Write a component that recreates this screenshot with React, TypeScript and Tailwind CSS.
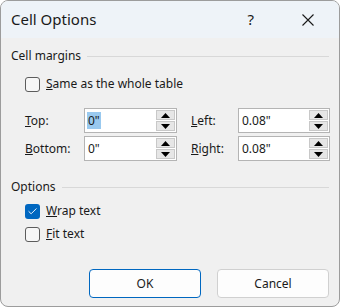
import { Check } from "lucide-react"

function Spin() {
    return (
        <div className="flex flex-col gap-[1px] mr-[1px]">
            <div className="w-[19px] h-[10px] bg-[#e6e6e6] border border-[#c8c8c8] flex items-center justify-center">
                <svg width="9" height="5" viewBox="0 0 9 5"><path d="M4.5 0 L9 5 L0 5 Z" fill="#000" /></svg>
            </div>
            <div className="w-[19px] h-[10px] bg-[#e6e6e6] border border-[#c8c8c8] flex items-center justify-center">
                <svg width="9" height="5" viewBox="0 0 9 5"><path d="M0 0 L9 0 L4.5 5 Z" fill="#000" /></svg>
            </div>
        </div>
    )
}

function Field({ value, selected }: { value: string; selected?: boolean }) {
    return (
        <div className="w-full h-[25px] bg-white border border-[#b4b4b4] flex items-center justify-between pl-[2px]">
            <span className={selected ? "bg-[#99c9ef] px-[1px] leading-[17px]" : "px-[1px] leading-[17px]"}>{value}</span>
            <Spin />
        </div>
    )
}

function Box({ checked }: { checked?: boolean }) {
    return checked ? (
        <div className="w-[15px] h-[15px] rounded-[3px] bg-[#0067c0] flex items-center justify-center">
            <Check size={11} color="#fff" strokeWidth={2} />
        </div>
    ) : (
        <div className="w-[15px] h-[15px] rounded-[3px] border border-[#5c5c5c] bg-[#f7f7f7]" />
    )
}

export default function App() {
    return (
        <div className="w-[340px] h-[308px] bg-white" style={{ fontFamily: '"Segoe UI", "Noto Sans", sans-serif' }}>
            <div className="w-[340px] h-[307px] rounded-lg border border-[#9c9c9c] bg-[#f0f0f0] overflow-hidden flex flex-col text-[12px] text-[#1a1a1a]">
                <div className="h-[37px] bg-[#eef3f8] flex items-center pl-[10px] pr-[25px] shrink-0">
                    <span className="text-[15px] flex-1">Cell Options</span>
                    <span className="text-[15px] mr-[48px]">?</span>
                    <svg width="12" height="12" viewBox="0 0 12 12"><path d="M0.5 0.5 L11.5 11.5 M11.5 0.5 L0.5 11.5" stroke="#1a1a1a" strokeWidth="1.1" /></svg>
                </div>
                <div className="flex flex-col px-[10px] pt-[10px]">
                    <div className="flex items-center gap-[6px] h-[16px]">
                        <span>Cell margins</span>
                        <div className="flex-1 h-px bg-[#d8d8d8]" />
                    </div>
                    <div className="flex items-center gap-[6px] pl-[14px] mt-[11px]">
                        <Box />
                        <span><u>S</u>ame as the whole table</span>
                    </div>
                    <div className="grid grid-cols-[59px_93px_61px_92px] gap-y-[3px] pl-[14px] mt-[15px] items-center">
                        <span><u>T</u>op:</span>
                        <Field value={'0"'} selected />
                        <span className="pl-[14px]"><u>L</u>eft:</span>
                        <Field value={'0.08"'} />
                        <span><u>B</u>ottom:</span>
                        <Field value={'0"'} />
                        <span className="pl-[14px]"><u>R</u>ight:</span>
                        <Field value={'0.08"'} />
                    </div>
                    <div className="flex items-center gap-[6px] h-[16px] mt-[18px]">
                        <span>Options</span>
                        <div className="flex-1 h-px bg-[#d8d8d8]" />
                    </div>
                    <div className="flex items-center gap-[6px] pl-[14px] mt-[7px]">
                        <Box checked />
                        <span><u>W</u>rap text</span>
                    </div>
                    <div className="flex items-center gap-[6px] pl-[14px] mt-[5px]">
                        <Box />
                        <span><u>F</u>it text</span>
                    </div>
                    <div className="flex justify-end gap-[16px] mt-[26px]">
                        <button className="w-[112px] h-[29px] rounded-[4px] border border-[#0067c0] bg-[#fdfdfd] text-[12px]">OK</button>
                        <button className="w-[112px] h-[29px] rounded-[4px] border border-[#d0d0d0] bg-[#fdfdfd] text-[12px]">Cancel</button>
                    </div>
                </div>
            </div>
        </div>
    )
}
